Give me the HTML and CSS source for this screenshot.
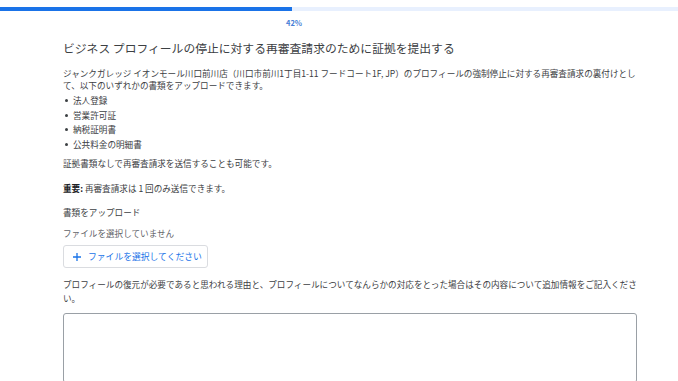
FILE: index.html
```html
<!DOCTYPE html>
<html lang="ja">
<head>
    <meta charset="UTF-8">
    <meta name="viewport" content="width=device-width, initial-scale=1.0">
    <title>証拠を提出する</title>
    <link rel="stylesheet" href="styles.css">
</head>
<body>
    <div class="progress"><div class="progress-fill" style="width: 43%"></div></div>
    <p class="pct">42%</p>
    <main class="form">
        <h1 class="title">ビジネス プロフィールの停止に対する再審査請求のために証拠を提出する</h1>
        <p class="intro">ジャンクガレッジ イオンモール川口前川店（川口市前川1丁目1-11 フードコート1F, JP）のプロフィールの強制停止に対する再審査請求の裏付けとして、以下のいずれかの書類をアップロードできます。</p>
        <ul class="docs">
            <li>法人登録</li>
            <li>営業許可証</li>
            <li>納税証明書</li>
            <li>公共料金の明細書</li>
        </ul>
        <p class="note">証拠書類なしで再審査請求を送信することも可能です。</p>
        <p class="important"><b>重要:</b> 再審査請求は 1 回のみ送信できます。</p>
        <p class="label">書類をアップロード</p>
        <p class="nofile">ファイルを選択していません</p>
        <button class="upload" type="button">
            <svg width="10" height="10" viewBox="0 0 10 10"><path d="M5 1v8M1 5h8" stroke="#1a73e8" stroke-width="1.3"/></svg>
            <span>ファイルを選択してください</span>
        </button>
        <p class="reason">プロフィールの復元が必要であると思われる理由と、プロフィールについてなんらかの対応をとった場合はその内容について追加情報をご記入ください。</p>
        <textarea class="details"></textarea>
    </main>
</body>
</html>
```

FILE: styles.css
```css
body { margin: 0; font-family: "Noto Sans CJK JP", "Noto Sans", sans-serif; color: #3c4043; background: #fff; overflow: hidden; }
p, h1, ul { margin: 0; }
.progress { margin-top: 7px; height: 4px; background: #e8f0fe; }
.progress-fill { height: 100%; background: #1a73e8; }
.pct { margin-top: 7px; padding-left: 286px; font-size: 7.5px; line-height: 10px; font-weight: 700; color: #4a7fd6; }
.form { width: 574px; margin-left: 63px; font-size: 8.6px; line-height: 12px; }
.title { margin-top: 12px; font-size: 11.8px; line-height: 16px; font-weight: 400; color: #3c4043; }
.intro { margin-top: 11px; }
.docs { list-style: none; padding: 0; margin-top: 2px; }
.docs li { line-height: 14.6px; padding-left: 10px; position: relative; }
.docs li::before { content: ""; position: absolute; left: 2px; top: 6px; width: 3px; height: 3px; border-radius: 50%; background: #3c4043; }
.note { margin-top: 6px; }
.important { margin-top: 13px; }
.important b { font-weight: 700; color: #202124; }
.label { margin-top: 12px; }
.nofile { margin-top: 9px; color: #5f6368; }
.upload { margin-top: 6px; display: flex; align-items: center; gap: 6px; height: 23px; width: 145px; padding: 0 0 0 8px; border: 1px solid #dadce0; border-radius: 3px; background: #fff; color: #1a73e8; font: inherit; font-size: 8.8px; cursor: pointer; }
.reason { margin-top: 9px; line-height: 14px; }
.details { display: block; margin-top: 8px; width: 574px; height: 70px; box-sizing: border-box; border: 1px solid #9aa0a6; border-radius: 3px; resize: none; }
```
